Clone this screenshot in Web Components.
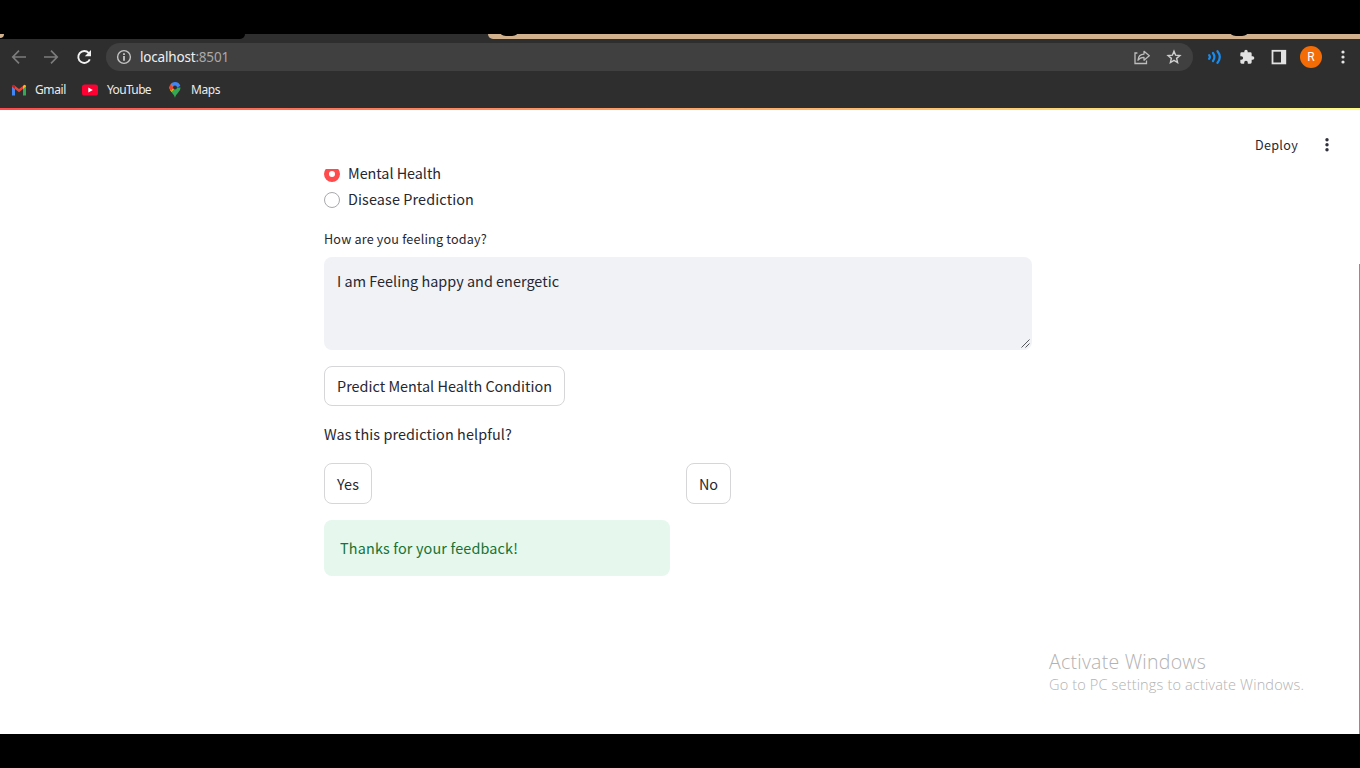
<!DOCTYPE html>
<html lang="en">
<head>
<meta charset="utf-8">
<title>localhost:8501</title>
<style>
html,body{margin:0;height:100%;background:#000;overflow:hidden}
</style>
</head>
<body>
<app-screen></app-screen>
<script>
const define=(name,html,ready)=>customElements.define(name,class extends HTMLElement{
  constructor(){super();const t=document.createElement('template');t.innerHTML=html;this.attachShadow({mode:'open'}).append(t.content.cloneNode(true));}
  connectedCallback(){if(ready)ready(this);}
});

/* One line of text, tracked so that it fills the given width. */
define('fit-text',`<style>:host{display:block;white-space:pre;flex:none}span{display:inline-block}</style><span><slot></slot></span>`,el=>{
  const s=el.shadowRoot.querySelector('span'),w=+el.getAttribute('w'),n=el.textContent.length;
  el.style.width=w+'px';
  const natural=s.getBoundingClientRect().width;
  if(natural)s.style.letterSpacing=((w-natural)/n).toFixed(3)+'px';
});

const icons={
back:['0 0 16 16','<path d="M15 8H2M8 1.7 1.8 8 8 14.3" fill="none" stroke="#7c7c7c" stroke-width="1.7"/>'],
forward:['0 0 16 16','<path d="M1 8h13M8 1.7 14.2 8 8 14.3" fill="none" stroke="#7c7c7c" stroke-width="1.7"/>'],
reload:['0 0 16 16','<path d="M13.8 10.3A6 6 0 1 1 12.8 4" fill="none" stroke="#f2f2f2" stroke-width="1.9"/><path d="M15 1v6.200H8.800z" fill="#f2f2f2"/>'],
info:['0 0 16 16','<circle cx="8" cy="8" r="6.4" fill="none" stroke="#c4c4c4" stroke-width="1.4"/><path d="M8 7v4.7M8 4.2v1.7" stroke="#d0d0d0" stroke-width="1.7"/>'],
share:['0 0 16 16','<path d="M3.4 4H1v10.500h11.500V11.500" fill="none" stroke="#bdbdbd" stroke-width="1.3"/><path d="M4 11.2C4.2 7.500 6.300 5.300 10 5.100V2.300L15.300 6.800 10 11.200V8.400C7.400 8.300 5.500 9.200 4 11.200z" fill="none" stroke="#bdbdbd" stroke-width="1.300" stroke-linejoin="round"/>'],
star:['0 0 16 16','<path d="m8 2.200 1.600 4 4.300.350-3.300 2.800 1 4.200L8 11.300l-3.600 2.250 1-4.200-3.300-2.800 4.300-.350z" fill="none" stroke="#cfcfcf" stroke-width="1.400"/>'],
waves:['0 0 16 16','<g fill="none" stroke="#1a8cec" stroke-width="2.200" stroke-linecap="round"><path d="M2.200 6.200q1.400 1.800 0 3.600M6 4q2.800 4 0 8M10.500 2.200q4.600 5.800 0 11.600"/></g>'],
puzzle:['0 0 24 24','<path d="M20.500 11H19V7a2 2 0 0 0-2-2h-4V3.500a2.500 2.500 0 0 0-5 0V5H4a2 2 0 0 0-2 2v3.800h1.500a2.700 2.700 0 0 1 0 5.400H2V20c0 1.100.9 2 2 2h3.800v-1.500a2.700 2.700 0 0 1 5.400 0V22H17a2 2 0 0 0 2-2v-4h1.500a2.500 2.500 0 0 0 0-5z" fill="#e2e2e2"/>'],
panel:['0 0 16 16','<rect x="1.500" y="1.800" width="12.800" height="12.600" fill="none" stroke="#e2e2e2" stroke-width="1.800"/><path d="M10 2h4.500v12.500H10z" fill="#e2e2e2"/>'],
dots:['0 0 16 16','<g fill="#e5e5e5"><circle cx="8" cy="3" r="1.600"/><circle cx="8" cy="8" r="1.600"/><circle cx="8" cy="13" r="1.600"/></g>'],
menu:['0 0 16 16','<g fill="#30313b"><circle cx="8" cy="2.700" r="1.700"/><circle cx="8" cy="7.700" r="1.700"/><circle cx="8" cy="12.700" r="1.700"/></g>'],
gmail:['0 0 16 12','<path d="M1 11.500V2h3v9.500H2z" fill="#4285f4"/><path d="M12 2h3v9.500h-3z" fill="#34a853"/><path d="M1 2.500 2.500.7 8 5 13.500.7 15 2.500 8 8.300z" fill="#ea4335"/><path d="M1 2.500Q1 1 2.500.7L4 2v3z" fill="#c5221f"/><path d="M15 2.500Q15 1 13.500.7L12 2v3z" fill="#fbbc04"/>'],
youtube:['0 0 18 12','<rect x="1" y=".5" width="16" height="11" rx="2.600" fill="#ff0033"/><path d="m7.300 3.500 4.500 2.500-4.500 2.500z" fill="#fff"/>'],
maps:['0 0 12 16','<path d="M6 16C5.300 11.500.5 10 .5 5.500h11C11.500 10 6.700 11.500 6 16z" fill="#34a853"/><path d="M.5 5.500Q.6 8 2.500 10L7.500 4 3 1.500Q.5 3 .5 5.500z" fill="#fbbc04"/><path d="M1.500 2.300 5 5.500 2 8.900Q-.8 5.500 1.500 2.300z" fill="#ea4335"/><path d="M1.700 2Q3.500 0 6 0q4.200 0 5.300 4L8 5.500 4.500 5z" fill="#4285f4"/><circle cx="6" cy="5.400" r="2" fill="#2e2e2e"/>'],
grip:['0 0 9 9','<path d="M.5 8.500 8.500.5M4.500 8.500l4-4" fill="none" stroke="#55555c" stroke-width="1"/>']
};
define('ui-icon',`<style>:host{display:block;flex:none;width:16px;height:16px}svg{display:block;width:100%;height:100%}</style><svg></svg>`,el=>{
  const [box,body]=icons[el.getAttribute('name')],s=el.shadowRoot.querySelector('svg');
  s.setAttribute('viewBox',box);s.innerHTML=body;
});

define('tab-strip',`<style>
:host{display:flex;height:5px;background:#2e2e2e;overflow:hidden}
.dark{width:245px;background:#000;border-radius:0 0 6px 0;margin-right:243px;position:relative}
.dark::before{content:"";position:absolute;left:0;top:0;width:4px;height:4px;background:#d1b18d;border-radius:0 0 4px 0}
.tan{flex:1;background:#d1b18d;border-radius:0 0 0 7px;display:flex;justify-content:space-between;padding:0 113px 0 13px}
i{width:16px;height:2px;background:#000;border-radius:0 0 8px 8px/0 0 2px 2px}
</style><div class="dark"></div><div class="tan"><i></i><i></i></div>`);

define('browser-toolbar',`<style>
:host{display:flex;align-items:center;box-sizing:border-box;height:37px;padding:0 9px 1px 11px;background:#2e2e2e}
.nav{display:flex;gap:16px;width:95px}
.nav ui-icon:last-child{margin-left:1px}
.bar{box-sizing:border-box;display:flex;align-items:center;width:1087px;height:28px;border-radius:14px;background:#404040;padding:0 11px 0 10px;font:13.5px/20px "Noto Sans",sans-serif;color:#f0f0f0}
.bar fit-text{margin-left:8px}.bar b{font-weight:400;color:#a9a9a9}
.end{margin-left:auto;display:flex;gap:16px}
.tools{display:flex;align-items:center;margin-left:14px;flex:1;gap:16px}
.av{flex:none;width:22px;height:22px;border-radius:50%;background:#f36c05;color:#fff;font:12px/22px Roboto,sans-serif;text-align:center;margin:0 -3px 0 -3px}
</style>
<div class="nav"><ui-icon name="back"></ui-icon><ui-icon name="forward"></ui-icon><ui-icon name="reload"></ui-icon></div>
<div class="bar"><ui-icon name="info"></ui-icon><fit-text w="89">localhost<b>:8501</b></fit-text><div class="end"><ui-icon name="share"></ui-icon><ui-icon name="star"></ui-icon></div></div>
<div class="tools"><ui-icon name="waves"></ui-icon><ui-icon name="puzzle"></ui-icon><ui-icon name="panel"></ui-icon><div class="av">R</div><ui-icon name="dots"></ui-icon></div>`);

define('bookmarks-bar',`<style>
:host{display:flex;box-sizing:border-box;height:32px;background:#2e2e2e;padding:4px 0 0 11px;font:12px/18px "Noto Sans",sans-serif;color:#ececec}
div{display:flex;align-items:center;height:20px}
</style>
<div style="width:71px;gap:8px"><ui-icon name="gmail" style="height:12px"></ui-icon><fit-text w="31">Gmail</fit-text></div>
<div style="width:87px;gap:8px"><ui-icon name="youtube" style="width:18px;height:12px;margin-left:-1px"></ui-icon><fit-text w="44">YouTube</fit-text></div>
<div style="gap:10px"><ui-icon name="maps" style="width:12px;height:16px"></ui-icon><fit-text w="29">Maps</fit-text></div>`);

define('radio-option',`<style>
:host{display:flex;align-items:center;gap:8px;height:26px}
i{box-sizing:border-box;width:16px;height:16px;border-radius:50%;border:1px solid #a9a9ad;background:#fff}
:host([checked]) i{border:5px solid #ff4b4b;clip-path:inset(3px 0 0 0)}
::slotted(*){margin-bottom:2px}
</style><i></i><slot></slot>`);

define('action-button',`<style>
:host{display:flex;align-items:center;justify-content:center;box-sizing:border-box;height:40px;border:1px solid #d6d6d9;border-radius:8px;background:#fff}
</style><slot></slot>`);

define('text-box',`<style>
:host{display:block;position:relative;box-sizing:border-box;height:93px;background:#f0f2f6;border-radius:8px;padding:12px 13px}
ui-icon{position:absolute;right:2px;bottom:2px;width:9px;height:9px}
</style><slot></slot><ui-icon name="grip"></ui-icon>`);

define('success-alert',`<style>
:host{display:flex;align-items:center;box-sizing:border-box;width:346px;height:56px;background:#e6f7ed;border-radius:8px;padding:0 16px;color:#177233}
</style><slot></slot>`);

define('prediction-page',`<style>
:host{display:flex;flex-direction:column;position:relative;height:624px;background:#fff;font:14.4px/24px "Noto Sans CJK SC","Noto Sans",sans-serif;color:#262730}
header{display:flex;align-items:center;justify-content:flex-end;box-sizing:border-box;height:59px;padding:11px 25px 0 0;gap:21px;font-size:12.600px}
main{flex:1;display:flow-root;width:708px;margin-left:324px}
.radios{margin-top:-8px}
.label{font-size:12.600px;margin:14px 0 6px}
.row{display:flex;gap:16px}
.row>div{width:346px}
.scroll{position:absolute;right:0;top:154px;bottom:0;width:1px;background:#8e8e8e}
.mark{position:absolute;left:1049px;top:539px;color:#b2b2b2;font:300 19.500px/26px "Open Sans","Noto Sans",sans-serif}
.mark .s{font-size:14.500px;line-height:20px}
</style>
<header><fit-text w="43">Deploy</fit-text><ui-icon name="menu"></ui-icon></header>
<main>
<div class="radios"><radio-option checked><fit-text w="93">Mental Health</fit-text></radio-option><radio-option><fit-text w="126">Disease Prediction</fit-text></radio-option></div>
<fit-text class="label" w="163">How are you feeling today?</fit-text>
<text-box><fit-text w="222">I am Feeling happy and energetic</fit-text></text-box>
<action-button style="width:241px;margin-top:16px"><fit-text w="215" style="margin-bottom:1px">Predict Mental Health Condition</fit-text></action-button>
<fit-text w="188" style="margin:16px 0 17px">Was this prediction helpful?</fit-text>
<div class="row"><div><action-button style="width:48px;height:41px"><fit-text w="22">Yes</fit-text></action-button></div><div><action-button style="width:45px;height:41px"><fit-text w="19">No</fit-text></action-button></div></div>
<success-alert style="margin-top:16px"><fit-text w="178">Thanks for your feedback!</fit-text></success-alert>
</main>
<div class="scroll"></div>
<div class="mark"><fit-text w="157">Activate Windows</fit-text><fit-text class="s" w="255">Go to PC settings to activate Windows.</fit-text></div>`);

define('app-screen',`<style>
:host{display:flex;flex-direction:column;box-sizing:border-box;width:1360px;height:768px;padding-top:34px;background:#000}
.line{height:2px;background:linear-gradient(90deg,#ff4b4b,#fffd80)}
</style><tab-strip></tab-strip><browser-toolbar></browser-toolbar><bookmarks-bar></bookmarks-bar><div class="line"></div><prediction-page></prediction-page>`);
</script>
</body>
</html>
